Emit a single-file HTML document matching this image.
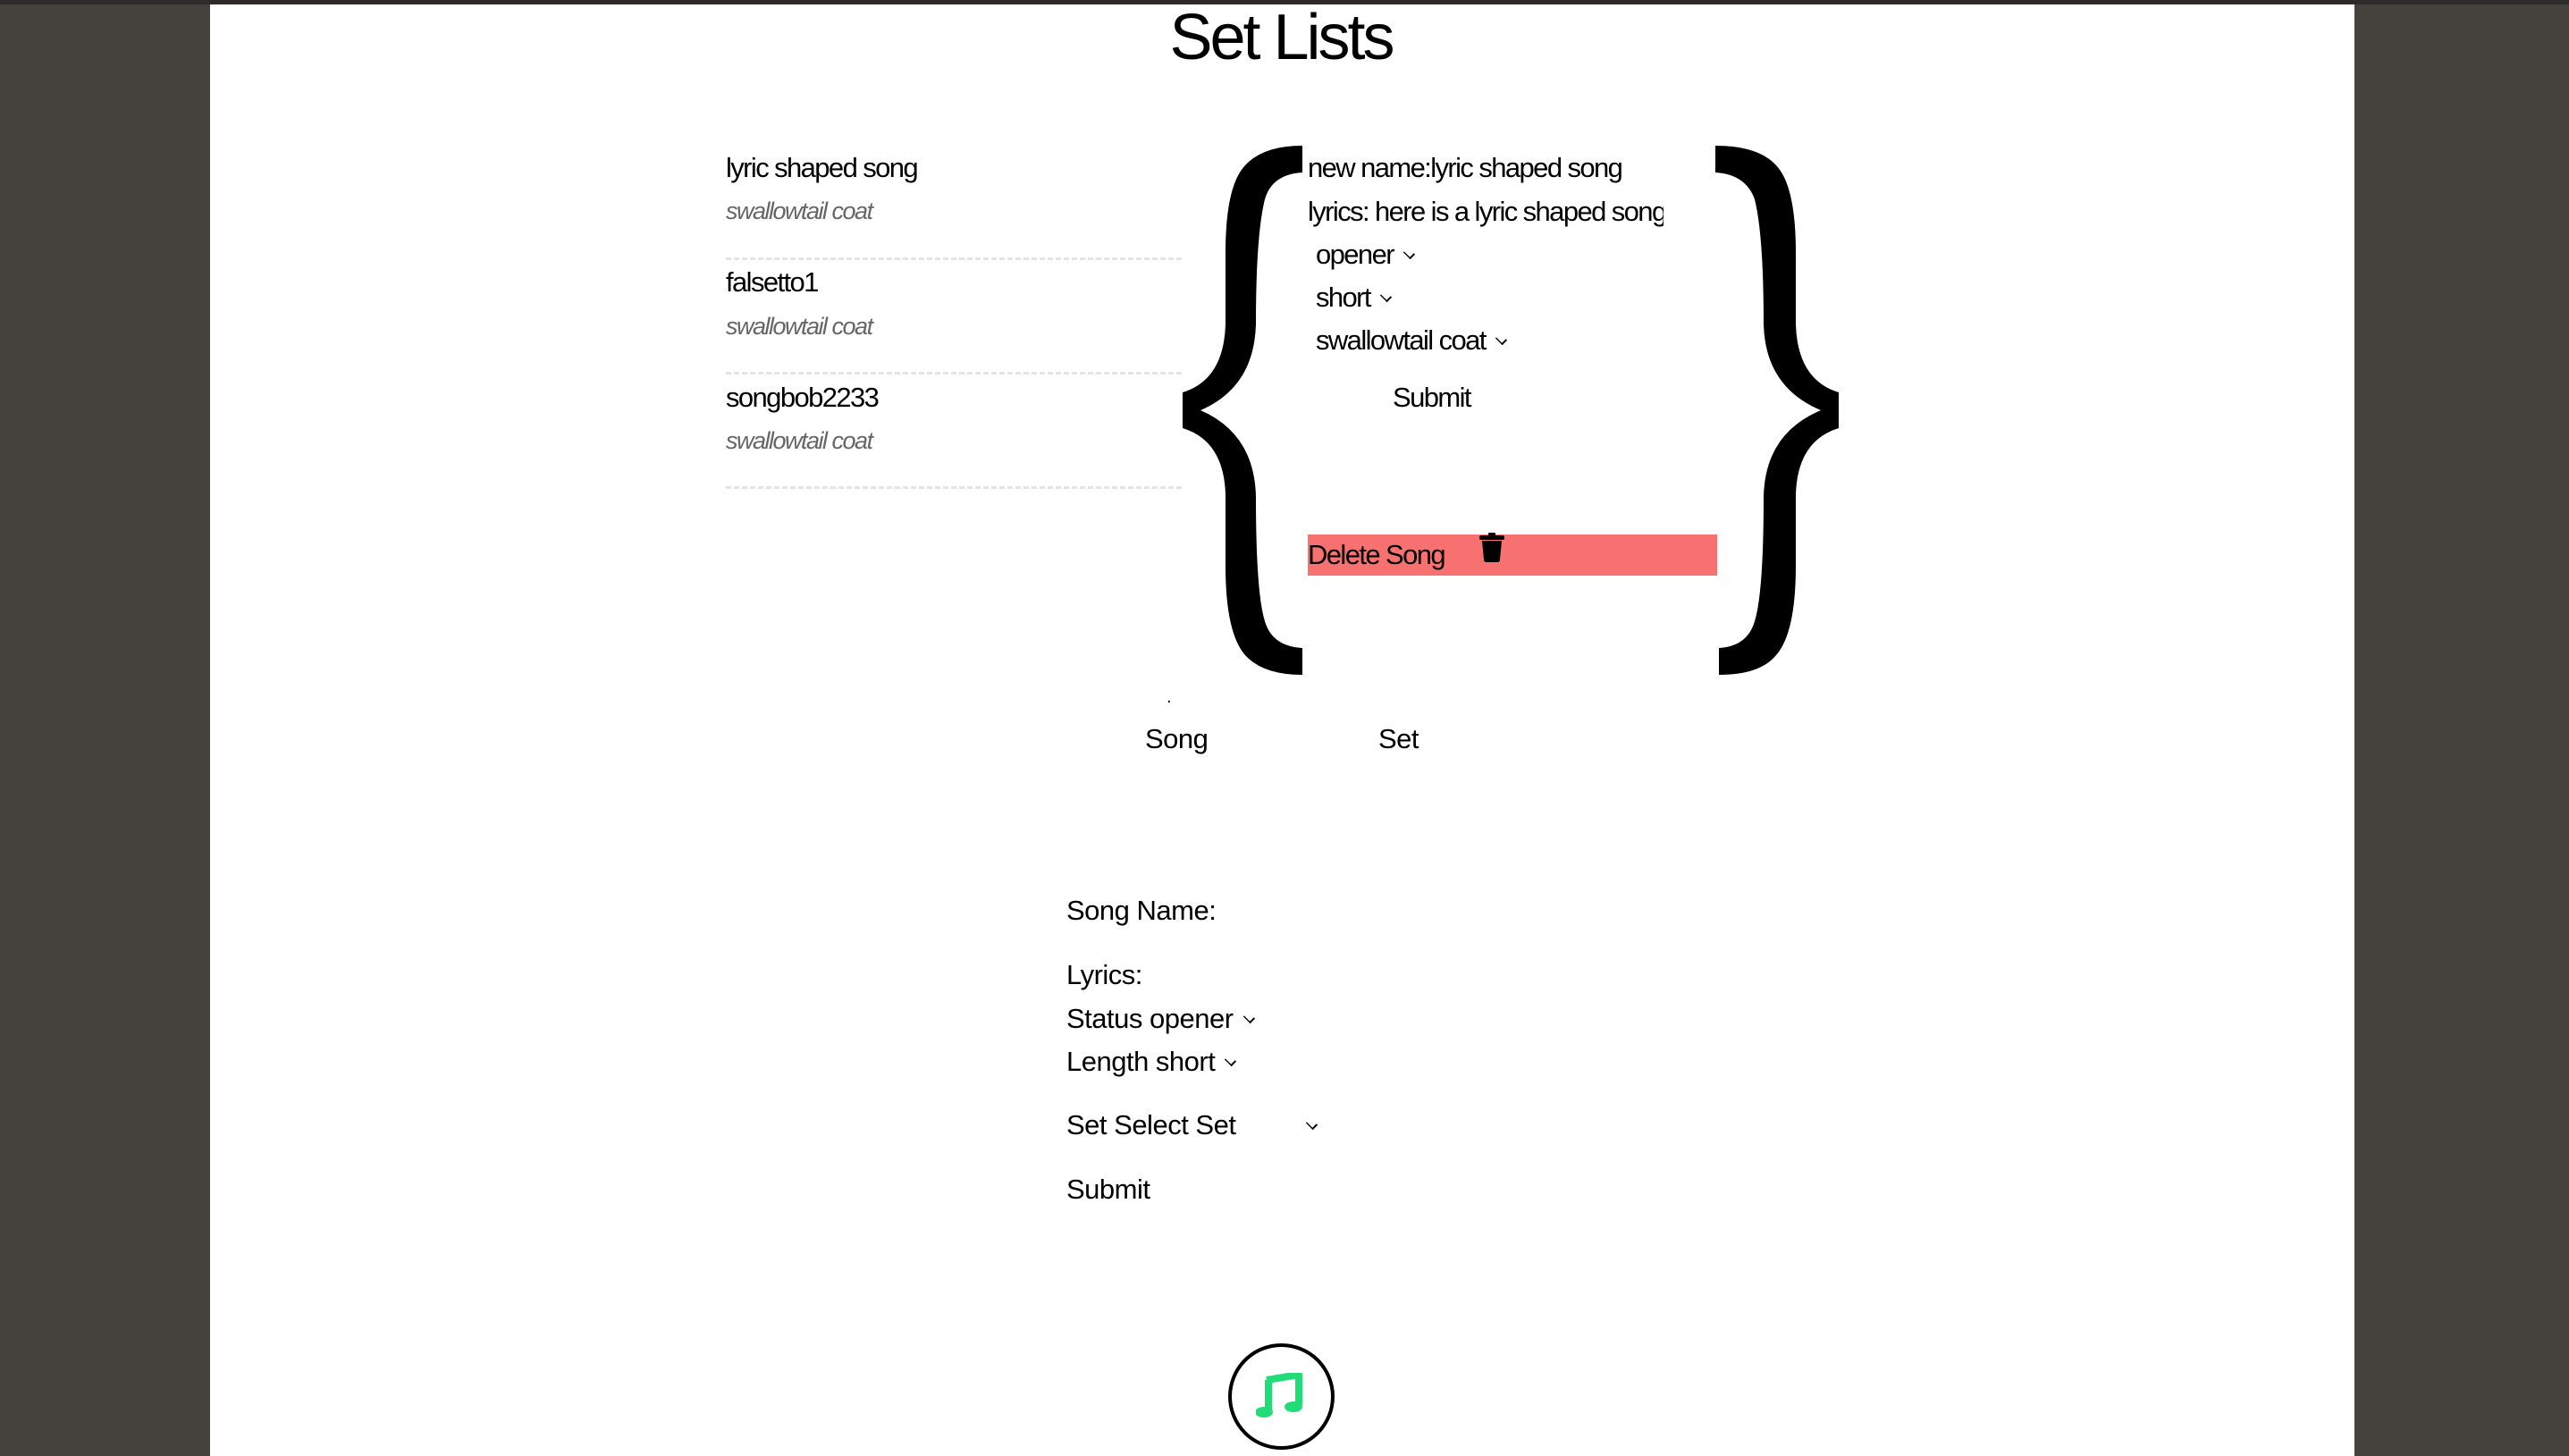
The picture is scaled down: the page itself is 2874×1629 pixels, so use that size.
<!DOCTYPE html>
<html><head><meta charset="utf-8"><style>
*{margin:0;padding:0;box-sizing:border-box}
html,body{width:2874px;height:1629px;overflow:hidden;background:#45423d;font-family:"Liberation Sans",sans-serif;color:#000}
#top{position:absolute;left:0;top:0;width:2874px;height:5px;background:#2e2c2a}
#panel{position:absolute;left:235px;top:5px;width:2399px;height:1624px;background:#fff}
.t{position:absolute;white-space:nowrap;line-height:1}
.c{font-size:31px;letter-spacing:-1.6px}
.i{font-size:27px;font-style:italic;color:#666;letter-spacing:-1.5px}
.w{font-size:31px;letter-spacing:-0.5px}
.dash{position:absolute;left:812px;width:510px;border-top:3px dashed #e4e4e4}
.chev{display:inline-block;width:11px;height:11px;border-right:2px solid #000;border-bottom:2px solid #000;transform:rotate(45deg) scaleY(0.7);margin-left:12px;position:relative;top:-6px}
</style></head><body>
<div id="top"></div>
<div id="panel"></div>
<div class="t" style="left:0;width:2866px;text-align:center;top:6px;font-size:72px;letter-spacing:-3px">Set Lists</div>

<div class="t c" style="left:812px;top:172px">lyric shaped song</div>
<div class="t i" style="left:812px;top:223px">swallowtail coat</div>
<div class="dash" style="top:288px"></div>
<div class="t c" style="left:812px;top:300px">falsetto1</div>
<div class="t i" style="left:812px;top:352px">swallowtail coat</div>
<div class="dash" style="top:416px"></div>
<div class="t c" style="left:812px;top:429px">songbob2233</div>
<div class="t i" style="left:812px;top:480px">swallowtail coat</div>
<div class="dash" style="top:544px"></div>

<svg style="position:absolute;left:1323px;top:163px" width="136" height="592" viewBox="0 0 136 592">
<path d="M134 0 L134 30 Q100 32 92 60 Q82 100 82 200 Q80 270 20 296 Q80 322 82 392 Q82 500 92 532 Q100 560 134 562 L134 592 Q90 592 70 570 Q48 545 48 470 L48 390 Q46 330 0 316 L0 276 Q46 262 48 200 L48 120 Q48 45 70 22 Q90 0 134 0Z" fill="#000"/>
</svg>
<svg style="position:absolute;left:1919px;top:163px" width="138" height="592" viewBox="0 0 138 592">
<path d="M0 0 L0 30 Q34 32 44 60 Q54 100 54 200 Q56 270 118 296 Q56 322 54 392 Q54 500 44 532 Q36 560 4 562 L4 592 Q50 592 68 570 Q90 545 90 470 L90 390 Q92 330 138 316 L138 276 Q92 262 90 200 L90 120 Q90 45 68 22 Q48 0 0 0Z" fill="#000"/>
</svg>

<div class="t c" style="left:1463px;top:172px">new name:lyric shaped song</div>
<div style="position:absolute;left:1463px;top:216px;width:398px;height:40px;overflow:hidden"><div class="t c" style="left:0;top:5px">lyrics: here is a lyric shaped song</div></div>
<div class="t c" style="left:1472px;top:269px">opener<span class="chev"></span></div>
<div class="t c" style="left:1472px;top:317px">short<span class="chev"></span></div>
<div class="t c" style="left:1472px;top:365px">swallowtail coat<span class="chev"></span></div>
<div class="t c" style="left:1558px;top:429px">Submit</div>
<div style="position:absolute;left:1463px;top:598px;width:458px;height:46px;background:#f87171"></div>
<div class="t c" style="left:1463px;top:605px">Delete Song</div>
<svg style="position:absolute;left:1654px;top:596px" width="30" height="33" viewBox="0 0 30 33">
<rect x="11" y="0" width="8" height="4" rx="1" fill="#000"/>
<rect x="1" y="3" width="28" height="5" rx="2" fill="#000"/>
<path d="M4 9 H26 L24 30 Q24 33 21 33 H9 Q6 33 6 30Z" fill="#000"/>
</svg>

<div class="t w" style="left:1305px;top:770px;font-size:20px">.</div>
<div class="t w" style="left:1281px;top:811px">Song</div>
<div class="t w" style="left:1542px;top:811px">Set</div>

<div class="t w" style="left:1193px;top:1003px">Song Name:</div>
<div class="t w" style="left:1193px;top:1075px">Lyrics:</div>
<div class="t w" style="left:1193px;top:1124px">Status opener<span class="chev"></span></div>
<div class="t w" style="left:1193px;top:1172px">Length short<span class="chev"></span></div>
<div class="t w" style="left:1193px;top:1243px">Set Select Set</div>
<div class="t w" style="left:1450px;top:1243px"><span class="chev"></span></div>
<div class="t w" style="left:1193px;top:1315px">Submit</div>

<div style="position:absolute;left:1374px;top:1503px;width:119px;height:119px;border:4px solid #000;border-radius:50%"></div>
<svg style="position:absolute;left:1405px;top:1536px" width="56" height="52" viewBox="0 0 56 52">
<path d="M12 8 L48 2 L48 36" stroke="#22dd77" stroke-width="8" fill="none" stroke-linejoin="round"/>
<path d="M14 8 L14 42" stroke="#22dd77" stroke-width="8" fill="none"/>
<ellipse cx="9" cy="44" rx="10" ry="6" fill="#22dd77"/>
<ellipse cx="42" cy="38" rx="10" ry="6" fill="#22dd77"/>
</svg>
</body></html>
